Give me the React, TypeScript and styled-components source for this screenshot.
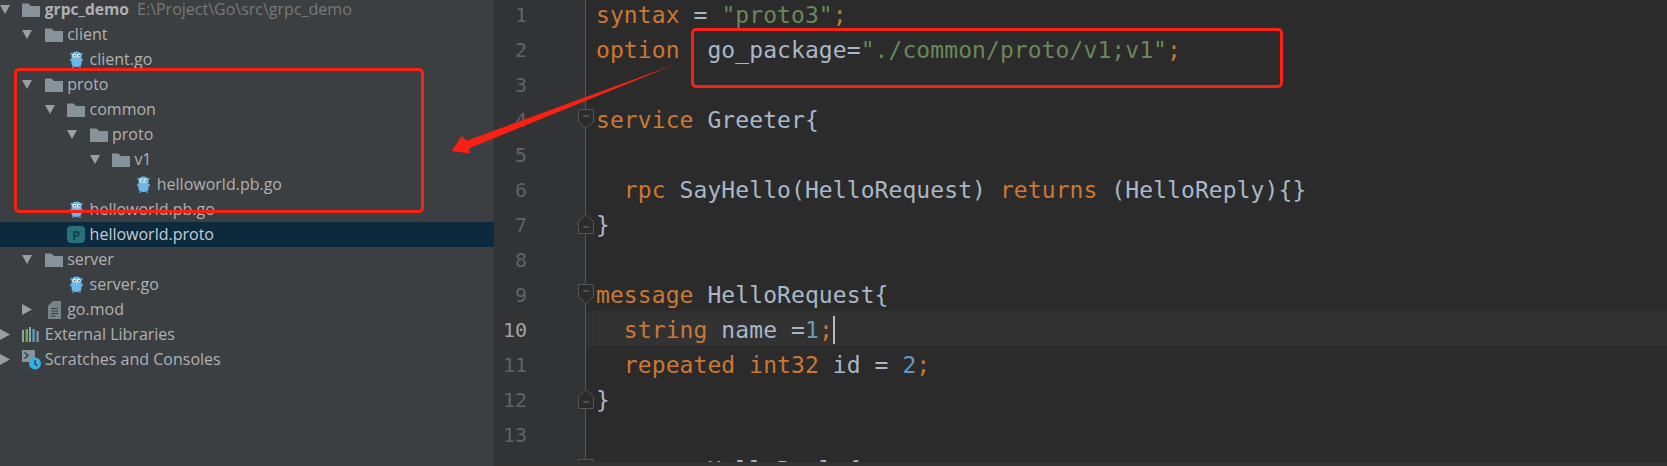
import React from 'react';
import styled, { createGlobalStyle } from 'styled-components';

const GlobalStyle = createGlobalStyle`
  html, body {
    margin: 0;
    padding: 0;
    background: #2b2b2b;
  }
`;

type NodeKind = 'folder' | 'go' | 'proto' | 'mod' | 'libs' | 'scratch';

interface TreeItem {
  level: number;
  label: string;
  kind: NodeKind;
  arrow?: 'down' | 'right';
  hint?: string;
  selected?: boolean;
}

const tree: TreeItem[] = [
  { level: 0, label: 'grpc_demo', kind: 'folder', arrow: 'down', hint: 'E:\\Project\\Go\\src\\grpc_demo' },
  { level: 1, label: 'client', kind: 'folder', arrow: 'down' },
  { level: 2, label: 'client.go', kind: 'go' },
  { level: 1, label: 'proto', kind: 'folder', arrow: 'down' },
  { level: 2, label: 'common', kind: 'folder', arrow: 'down' },
  { level: 3, label: 'proto', kind: 'folder', arrow: 'down' },
  { level: 4, label: 'v1', kind: 'folder', arrow: 'down' },
  { level: 5, label: 'helloworld.pb.go', kind: 'go' },
  { level: 2, label: 'helloworld.pb.go', kind: 'go' },
  { level: 2, label: 'helloworld.proto', kind: 'proto', selected: true },
  { level: 1, label: 'server', kind: 'folder', arrow: 'down' },
  { level: 2, label: 'server.go', kind: 'go' },
  { level: 1, label: 'go.mod', kind: 'mod', arrow: 'right' },
  { level: 0, label: 'External Libraries', kind: 'libs', arrow: 'right' },
  { level: 0, label: 'Scratches and Consoles', kind: 'scratch', arrow: 'right' },
];

type TokenKind = 'kw' | 'str' | 'num' | 'txt';
type CodeLine = {
  tokens: [TokenKind, string][];
  fold?: 'open' | 'close';
  current?: boolean;
};

const code: CodeLine[] = [
  { tokens: [['kw', 'syntax'], ['txt', ' = '], ['str', '"proto3"'], ['kw', ';']] },
  { tokens: [['kw', 'option'], ['txt', '  go_package='], ['str', '"./common/proto/v1;v1"'], ['kw', ';']] },
  { tokens: [] },
  { tokens: [['kw', 'service'], ['txt', ' Greeter{']], fold: 'open' },
  { tokens: [] },
  { tokens: [['txt', '  '], ['kw', 'rpc'], ['txt', ' SayHello(HelloRequest) '], ['kw', 'returns'], ['txt', ' (HelloReply){}']] },
  { tokens: [['txt', '}']], fold: 'close' },
  { tokens: [] },
  { tokens: [['kw', 'message'], ['txt', ' HelloRequest{']], fold: 'open' },
  { tokens: [['txt', '  '], ['kw', 'string'], ['txt', ' name ='], ['num', '1'], ['kw', ';']], current: true },
  { tokens: [['txt', '  '], ['kw', 'repeated int32'], ['txt', ' id = '], ['num', '2'], ['kw', ';']] },
  { tokens: [['txt', '}']], fold: 'close' },
  { tokens: [] },
  { tokens: [['kw', 'message'], ['txt', ' HelloReply{']], fold: 'open' },
];

const FolderIcon = () => (
  <svg width="18" height="14" viewBox="0 0 18 14">
    <path d="M0 0.5h6.5l2.5 2.5h9v11H0z" fill="#87939a" />
  </svg>
);

const GopherIcon = () => (
  <svg width="13" height="17" viewBox="0 0 13 17">
    <circle cx="1.6" cy="3" r="1.3" fill="#5b9bc7" />
    <circle cx="11.4" cy="3" r="1.3" fill="#5b9bc7" />
    <path d="M2 15.6h2v1.2H2zM9 15.6h2v1.2H9z" fill="#5d9fcb" />
    <rect x="0.2" y="8" width="1.6" height="2.4" rx="0.8" fill="#7fbfe8" />
    <rect x="11.2" y="8" width="1.6" height="2.4" rx="0.8" fill="#7fbfe8" />
    <path d="M6.5 0.4C3.4 0.4 1.5 2.4 1.5 5.2v7.6c0 2 2 3.2 5 3.2s5-1.2 5-3.2V5.2c0-2.8-1.9-4.8-5-4.8z" fill="#6ab7ea" />
    <circle cx="4.4" cy="4.6" r="1.9" fill="#f2f7fa" />
    <circle cx="8.6" cy="4.6" r="1.9" fill="#f2f7fa" />
    <circle cx="4.8" cy="4.8" r="0.8" fill="#27333b" />
    <circle cx="9" cy="4.8" r="0.8" fill="#27333b" />
    <rect x="5.6" y="6" width="1.8" height="1.4" rx="0.5" fill="#d9c6a8" />
  </svg>
);

const ModIcon = () => (
  <svg width="13" height="18" viewBox="0 0 13 18">
    <path d="M5 0h8v18H0V5z" fill="#76838a" />
    <path d="M3 7.5h7M3 10h7M3 12.5h7M3 15h4.5" stroke="#3c3f41" strokeWidth="1" />
  </svg>
);

const LibsIcon = () => (
  <svg width="18" height="15" viewBox="0 0 18 15">
    <rect x="0" y="3" width="2" height="12" fill="#9aa2a6" />
    <rect x="3.6" y="2" width="2.4" height="13" fill="#62b543" />
    <rect x="7" y="0" width="2" height="15" fill="#9aa2a6" />
    <rect x="10.4" y="2" width="2.4" height="13" fill="#4ea6c9" />
    <rect x="14.4" y="4" width="2.4" height="11" fill="#87939a" />
  </svg>
);

const ScratchIcon = () => (
  <svg width="20" height="20" viewBox="0 0 20 20">
    <rect x="0" y="0" width="13" height="12" fill="#87939a" />
    <path d="M2.5 2.5L6 5.5L2.5 8.5" fill="none" stroke="#2f3234" strokeWidth="1.2" />
    <circle cx="13" cy="13.5" r="6" fill="#35afe0" />
    <path d="M13 10v3.8l2.4 2" fill="none" stroke="#23343c" strokeWidth="1.2" />
  </svg>
);

const renderIcon = (kind: NodeKind) => {
  switch (kind) {
    case 'folder':
      return <FolderIcon />;
    case 'go':
      return <GoSlot><GopherIcon /></GoSlot>;
    case 'proto':
      return <ProtoBadge>P</ProtoBadge>;
    case 'mod':
      return <GoSlot><ModIcon /></GoSlot>;
    case 'libs':
      return <LibsIcon />;
    default:
      return <ScratchIcon />;
  }
};

const App: React.FC = () => {
  return (
    <Page>
      <GlobalStyle />
      <Sidebar>
        {tree.map((item, index) => (
          <TreeRow key={index} $level={item.level} $selected={item.selected}>
            <ArrowSlot>
              {item.arrow === 'down' && (
                <svg width="10" height="9" viewBox="0 0 10 9"><path d="M0 0h10L5 9z" fill="#9c9fa1" /></svg>
              )}
              {item.arrow === 'right' && (
                <svg width="10" height="11" viewBox="0 0 10 11"><path d="M0 0l10 5.5L0 11z" fill="#9c9fa1" /></svg>
              )}
            </ArrowSlot>
            <IconSlot>{renderIcon(item.kind)}</IconSlot>
            <Label $bold={item.level === 0 && !!item.hint} $selected={item.selected}>{item.label}</Label>
            {item.hint && <Hint>{item.hint}</Hint>}
          </TreeRow>
        ))}
      </Sidebar>
      <Editor>
        <Lines>
          {code.map((line, index) => (
            <LineRow key={index}>
              <LineNumber $current={line.current}>{index + 1}</LineNumber>
              <CodeCell $current={line.current}>
                {line.fold && (
                  <FoldMarker width="16" height="20" viewBox="0 0 16 20">
                    <path
                      d={line.fold === 'open' ? 'M0.5 0.5h15v12L8 19.5L0.5 12.5z' : 'M0.5 19.5h15v-12L8 0.5L0.5 7.5z'}
                      fill="#2b2b2b"
                      stroke="#555"
                    />
                    <path d={line.fold === 'open' ? 'M5 7h6' : 'M5 13h6'} stroke="#777" />
                  </FoldMarker>
                )}
                <CodeText $current={line.current}>
                  {line.tokens.map(([kind, text], i) => (
                    <Token key={i} $kind={kind}>{text}</Token>
                  ))}
                  {line.current && <Caret />}
                </CodeText>
              </CodeCell>
            </LineRow>
          ))}
        </Lines>
        <ScrollStrip />
      </Editor>
      <TreeCallout />
      <CodeCallout />
      <ArrowOverlay width="1667" height="466" viewBox="0 0 1667 466">
        <path d="M676 64L466.7 140.7L461.7 136L451.7 151L470 153.5L469.3 148.3z" fill="#fa2014" />
      </ArrowOverlay>
    </Page>
  );
};

const Page = styled.div`
  position: relative;
  display: flex;
  width: 1667px;
  height: 466px;
  overflow: hidden;
`;

const Sidebar = styled.div`
  width: 494px;
  flex-shrink: 0;
  height: 466px;
  background: #3c3f41;
  overflow: hidden;
  font-family: "Open Sans", "Noto Sans", sans-serif;
  font-size: 16px;
  color: #afb1b3;
  & > div:first-child {
    margin-top: -3px;
  }
`;

const TreeRow = styled.div<{ $level: number; $selected?: boolean }>`
  display: flex;
  align-items: center;
  height: 25px;
  box-sizing: border-box;
  padding-left: ${props => props.$level * 22.4}px;
  background: ${props => (props.$selected ? '#0d293e' : 'transparent')};
  white-space: nowrap;
`;

const ArrowSlot = styled.span`
  display: flex;
  align-items: center;
  width: 22.4px;
  flex-shrink: 0;
`;

const IconSlot = styled.span`
  display: flex;
  align-items: center;
  width: 22.4px;
  flex-shrink: 0;
`;

const GoSlot = styled.span`
  display: flex;
  align-items: center;
  padding-left: 3px;
`;

const ProtoBadge = styled.span`
  display: flex;
  align-items: center;
  justify-content: center;
  width: 18px;
  height: 17px;
  border-radius: 4px;
  background: #27707f;
  color: #16404f;
  font-size: 13px;
  font-weight: 700;
`;

const Label = styled.span<{ $bold?: boolean; $selected?: boolean }>`
  padding-bottom: 2px;
  font-size: ${props => (props.$bold ? '15.6px' : '16px')};
  font-weight: ${props => (props.$bold ? 700 : 400)};
  color: ${props => (props.$selected ? '#c6ccd2' : '#afb1b3')};
`;

const Hint = styled.span`
  margin-left: 8px;
  padding-bottom: 2px;
  color: #787878;
`;

const Editor = styled.div`
  flex: 1;
  display: flex;
  flex-direction: column;
  height: 466px;
  background: #2b2b2b;
  overflow: hidden;
  font-family: "DejaVu Sans Mono", "Liberation Mono", monospace;
`;

const Lines = styled.div`
  flex: 1;
  min-height: 0;
  overflow: hidden;
  & > div:first-child {
    margin-top: -4px;
  }
`;

const LineRow = styled.div`
  display: flex;
  height: 35px;
`;

const LineNumber = styled.div<{ $current?: boolean }>`
  width: 91px;
  box-sizing: border-box;
  flex-shrink: 0;
  padding-right: 58px;
  background: #313335;
  text-align: right;
  font-size: 20px;
  line-height: 38px;
  color: ${props => (props.$current ? '#a4a3a3' : '#606366')};
`;

const CodeCell = styled.div<{ $current?: boolean }>`
  position: relative;
  flex: 1;
  padding-left: 10px;
  border-left: 1px solid #555;
  background: ${props => (props.$current ? '#323232' : 'transparent')};
`;

const CodeText = styled.div<{ $current?: boolean }>`
  display: flex;
  align-items: center;
  height: 35px;
  padding-top: 3px;
  box-sizing: border-box;
  font-size: 23px;
  letter-spacing: 0.08px;
  white-space: pre;
  box-shadow: ${props => (props.$current ? '-1px 0 0 #2b2b2b' : 'none')};
`;

const tokenColors: Record<TokenKind, string> = {
  kw: '#cc7832',
  str: '#6a8759',
  num: '#6897bb',
  txt: '#a9b7c6',
};

const Token = styled.span<{ $kind: TokenKind }>`
  color: ${props => tokenColors[props.$kind]};
`;

const Caret = styled.span`
  display: inline-block;
  width: 2px;
  height: 28px;
  background: #bbbbbb;
`;

const FoldMarker = styled.svg`
  position: absolute;
  left: -8px;
  top: 8px;
`;

const ScrollStrip = styled.div`
  height: 4px;
  flex-shrink: 0;
  background: #333333;
`;

const Callout = styled.div`
  position: absolute;
  box-sizing: border-box;
  border: 3.5px solid #fa2014;
  border-radius: 5px;
`;

const TreeCallout = styled(Callout)`
  left: 14px;
  top: 68px;
  width: 410px;
  height: 145px;
`;

const CodeCallout = styled(Callout)`
  left: 691px;
  top: 28px;
  width: 592px;
  height: 60px;
`;

const ArrowOverlay = styled.svg`
  position: absolute;
  left: 0;
  top: 0;
  pointer-events: none;
`;

export default App;
